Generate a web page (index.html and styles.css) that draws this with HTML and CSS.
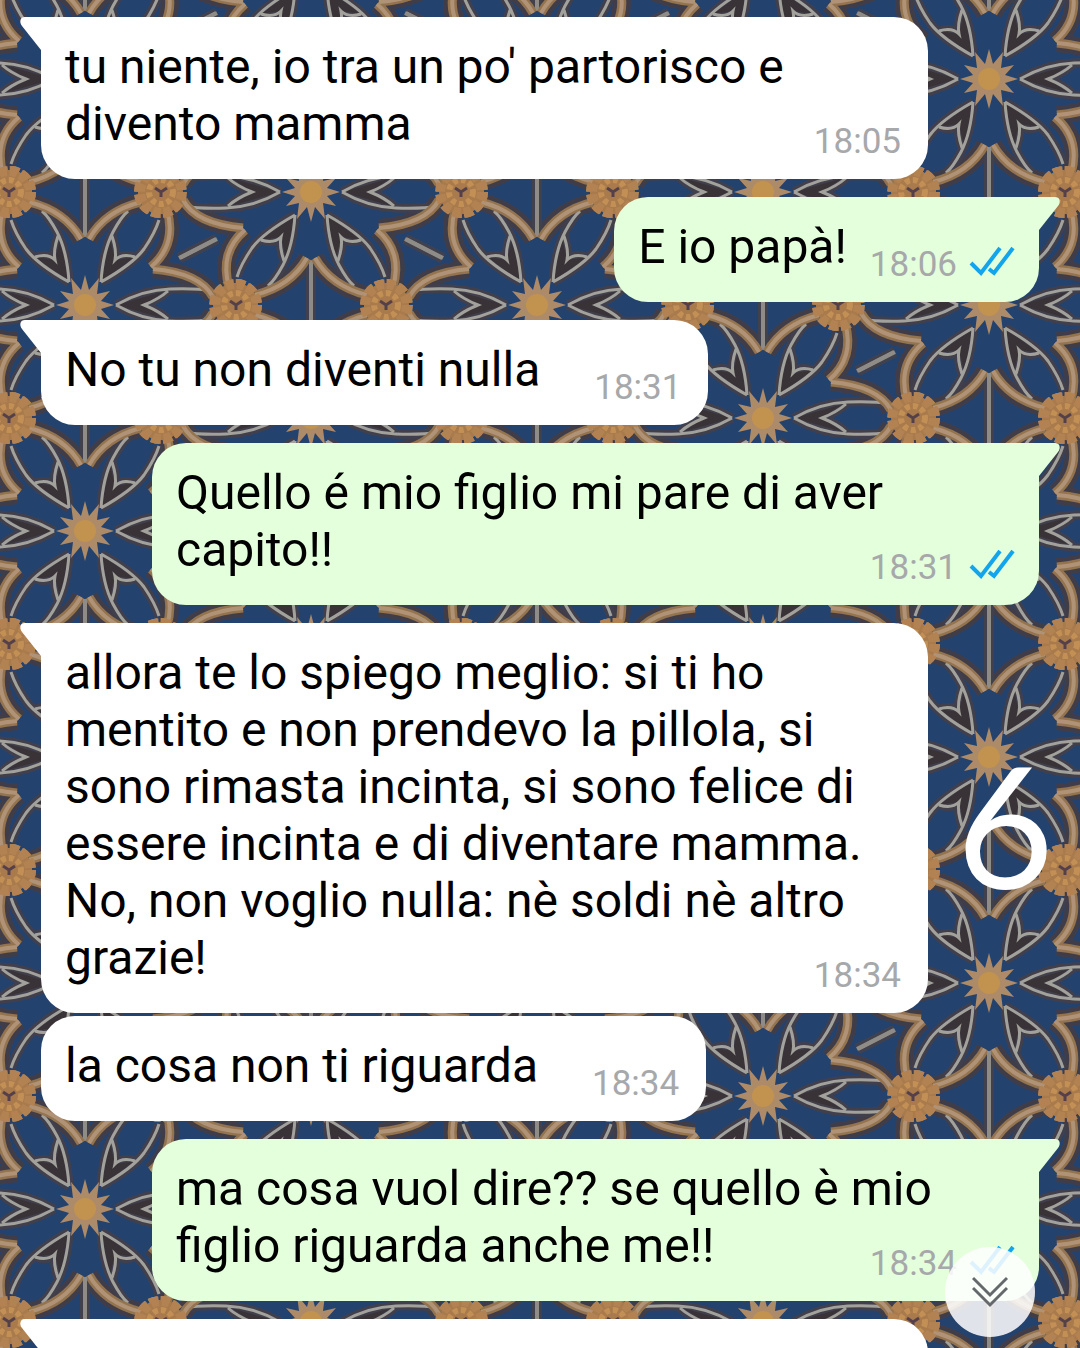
FILE: index.html
```html
<!DOCTYPE html>
<html lang="it">
<head>
    <meta charset="UTF-8">
    <meta name="viewport" content="width=device-width, initial-scale=1.0">
    <title>Chat</title>
    <link rel="stylesheet" href="styles.css">
</head>
<body>
    <svg class="wallpaper" aria-hidden="true">
        <defs>
            <!-- petali, disegnati attorno al centro del fiore -->
            <g id="petals">
                <path d="M31 0Q57-15 85-16Q111-17 128-14M31 0Q57 15 85 16Q111 17 128 14M83-14Q74-6 59 0Q74 6 83 14"/>
                <path d="M-31 0Q-57-15-85-16Q-111-17-128-14M-31 0Q-57 15-85 16Q-111 17-128 14M-83-14Q-74-6-59 0Q-74 6-83 14"/>
                <path id="petal" d="M16 23Q18 54 28 73Q36 88 43 94M16 23Q48 41 59 56Q70 72 74 85M27 69Q32 54 30 45Q37 52 50 48"/>
                <use href="#petal" transform="scale(-1 1)"/>
                <use href="#petal" transform="scale(1 -1)"/>
                <use href="#petal" transform="scale(-1 -1)"/>
            </g>
            <g id="gaps">
                <path d="M16 23L25 67L30 45L50 48ZM-16 23L-25 67L-30 45L-50 48ZM16-23L25-67L30-45L50-48ZM-16-23L-25-67L-30-45L-50-48Z"/>
                <path d="M31 0L80-14L59 0L80 14ZM-31 0L-80-14L-59 0L-80 14Z"/>
            </g>
            <g id="arcs">
                <path id="arc" d="M4 66Q20 94 56 103M66 38Q92 60 82 95M68-36Q115-32 128-8"/>
                <use href="#arc" transform="scale(-1 1)"/>
                <use href="#arc" transform="scale(1 -1)"/>
                <use href="#arc" transform="scale(-1 -1)"/>
            </g>
            <path id="bars" d="M0 68V158M0-68V-158M95-47L132-66M-95-47L-132-66M95 47L132 66M-95 47L-132 66"/>
            <g id="star">
                <path d="M29 0L16 4L25 14L12 11L14 27L4 15L0 30L-4 15L-14 27L-12 11L-25 14L-16 4L-29 0L-16-4L-25-14L-12-11L-14-27L-4-15L0-30L4-15L14-27L12-11L25-14L16-4Z"/>
                <circle class="core" r="11"/>
            </g>
            <g id="hub">
                <circle class="hub" r="22"/>
                <circle class="hub-ring" r="21"/>
                <circle class="hub-dots" r="12"/>
                <path class="hub-eye" d="M-6-4L0 0L6-4M0 0V5"/>
            </g>
            <g id="hubs">
                <use href="#hub" x="150"/>
                <use href="#hub" x="-150"/>
                <use href="#hub" x="75" y="113"/>
                <use href="#hub" x="-75" y="113"/>
                <use href="#hub" x="75" y="-113"/>
                <use href="#hub" x="-75" y="-113"/>
            </g>
            <g id="back">
                <use class="shade" href="#arcs"/>
                <use class="petal-shade" href="#petals"/>
                <use class="gap" href="#gaps"/>
                <use class="bar-shade" href="#bars"/>
            </g>
            <g id="front">
                <use class="bar" href="#bars"/>
                <use class="petal" href="#petals"/>
                <use class="arc" href="#arcs"/>
                <use class="arc-light" href="#arcs"/>
                <use class="star" href="#star"/>
                <use href="#hubs"/>
            </g>
            <pattern id="tiles" x="85" y="79" width="452" height="226" patternUnits="userSpaceOnUse">
                <rect class="ground" width="452" height="226"/>
                <use href="#back"/>
                <use href="#back" x="452"/>
                <use href="#back" y="226"/>
                <use href="#back" x="452" y="226"/>
                <use href="#back" x="226" y="-113"/>
                <use href="#back" x="226" y="339"/>
                <use href="#back" x="226" y="113"/>
                <use href="#front"/>
                <use href="#front" x="452"/>
                <use href="#front" y="226"/>
                <use href="#front" x="452" y="226"/>
                <use href="#front" x="226" y="-113"/>
                <use href="#front" x="226" y="339"/>
                <use href="#front" x="226" y="113"/>
            </pattern>
            <symbol id="ticks" viewBox="0 0 46 32">
                <path d="M2 17L12 27L31 2M20 23L25 27L44 2"/>
            </symbol>
        </defs>
        <rect width="100%" height="100%" fill="url(#tiles)"/>
    </svg>

    <main class="chat">
        <div class="message in tail">
            tu niente, io tra un po' partorisco e divento mamma
            <span class="meta"><time>18:05</time></span>
        </div>
        <div class="message out tail">
            E io papà!
            <span class="meta"><time>18:06</time><svg class="ticks"><use href="#ticks"/></svg></span>
        </div>
        <div class="message in tail">
            No tu non diventi nulla
            <span class="meta"><time>18:31</time></span>
        </div>
        <div class="message out tail">
            Quello é mio figlio mi pare di aver capito!!
            <span class="meta"><time>18:31</time><svg class="ticks"><use href="#ticks"/></svg></span>
        </div>
        <div class="message in tail">
            allora te lo spiego meglio: si ti ho mentito e non prendevo la pillola, si sono rimasta incinta, si sono felice di essere incinta e di diventare mamma. No, non voglio nulla: nè soldi nè altro grazie!
            <span class="meta"><time>18:34</time></span>
        </div>
        <div class="message in follow">
            la cosa non ti riguarda
            <span class="meta"><time>18:34</time></span>
        </div>
        <div class="message out tail">
            ma cosa vuol dire?? se quello è mio figlio riguarda anche me!!
            <span class="meta"><time>18:34</time><svg class="ticks"><use href="#ticks"/></svg></span>
        </div>
        <div class="message in tail wide"></div>
    </main>

    <div class="page-number">6</div>

    <button class="scroll-down" type="button" aria-label="Vai in fondo">
        <svg viewBox="0 0 36 32"><path d="M1 2L18 19L35 2M1 12L18 29L35 12"/></svg>
    </button>
</body>
</html>
```
FILE: styles.css
```css
* {
    box-sizing: border-box;
}
body {
    margin: 0;
    font-family: Roboto, "Liberation Sans", sans-serif;
    background: #1f416f;
}

/* sfondo */
.wallpaper {
    position: fixed;
    inset: 0;
    z-index: -1;
    width: 100%;
    height: 100%;
}
.ground {
    fill: #23426e;
}
.shade {
    fill: none;
    stroke: #403d48;
    stroke-width: 18px;
}
.petal-shade {
    fill: none;
    stroke: #403f4b;
    stroke-width: 9px;
}
.gap {
    fill: #393338;
}
.petal {
    fill: none;
    stroke: #a3a19b;
    stroke-width: 3px;
}
.arc {
    fill: none;
    stroke: #94744f;
    stroke-width: 9px;
}
.arc-light {
    fill: none;
    stroke: #b09376;
    stroke-width: 4px;
}
.bar-shade {
    stroke: #41414d;
    stroke-width: 10px;
}
.bar {
    stroke: #8f8c88;
    stroke-width: 4px;
}
.star {
    fill: #ad8a68;
}
.core {
    fill: #c2924f;
}
.hub {
    fill: #a87a4c;
}
.hub-ring {
    fill: none;
    stroke: #b28252;
    stroke-width: 10px;
    stroke-dasharray: 8 3;
}
.hub-dots {
    fill: none;
    stroke: #c28f55;
    stroke-width: 6px;
    stroke-dasharray: 5 3;
}
.hub-eye {
    fill: none;
    stroke: #55404a;
    stroke-width: 3px;
}

/* messaggi */
.chat {
    display: flex;
    flex-direction: column;
    align-items: flex-start;
    gap: 18px;
    height: 100vh;
    padding: 17px 41px 0;
    overflow: hidden;
}
.message {
    position: relative;
    display: flow-root;
    flex-shrink: 0;
    max-width: calc(100% - 111px);
    min-height: 105px;
    padding: 21px 24px 27px;
    border-radius: 34px;
    font-size: 48px;
    line-height: 57px;
    color: #000;
}
.in {
    background: #fff;
}
.out {
    align-self: flex-end;
    background: #e4ffdb;
}
.follow {
    margin-top: -15px;
}
.wide {
    width: 100%;
}
.in.tail {
    border-top-left-radius: 0;
}
.out.tail {
    border-top-right-radius: 0;
}
.tail::before {
    content: "";
    position: absolute;
    top: 0;
    left: -21px;
    width: 24px;
    height: 34px;
    background: inherit;
    clip-path: path("M24 0H5C0 0-1 5 2 9L21 33H24Z");
}
.out.tail::before {
    left: auto;
    right: -21px;
    transform: scaleX(-1);
}
.meta {
    float: right;
    display: flex;
    align-items: center;
    gap: 12px;
    height: 36px;
    margin: 29px 3px -8px 54px;
    font-size: 35px;
    line-height: 36px;
    color: #a6a8aa;
}
.out .meta {
    margin-left: 23px;
    margin-right: 0;
}
.ticks {
    width: 46px;
    height: 32px;
    margin-bottom: 6px;
    fill: none;
    stroke: #12a5ee;
    stroke-width: 4px;
}

.page-number {
    position: fixed;
    top: 724px;
    right: 26px;
    font-family: Lato, sans-serif;
    font-size: 168px;
    line-height: 200px;
    color: #fff;
}
.scroll-down {
    position: fixed;
    right: 45px;
    bottom: 11px;
    display: flex;
    align-items: center;
    justify-content: center;
    width: 90px;
    height: 90px;
    padding: 0;
    border: 0;
    border-radius: 50%;
    background: rgba(255, 255, 255, 0.86);
}
.scroll-down svg {
    width: 36px;
    height: 32px;
    fill: none;
    stroke: #66696c;
    stroke-width: 3px;
}
```
